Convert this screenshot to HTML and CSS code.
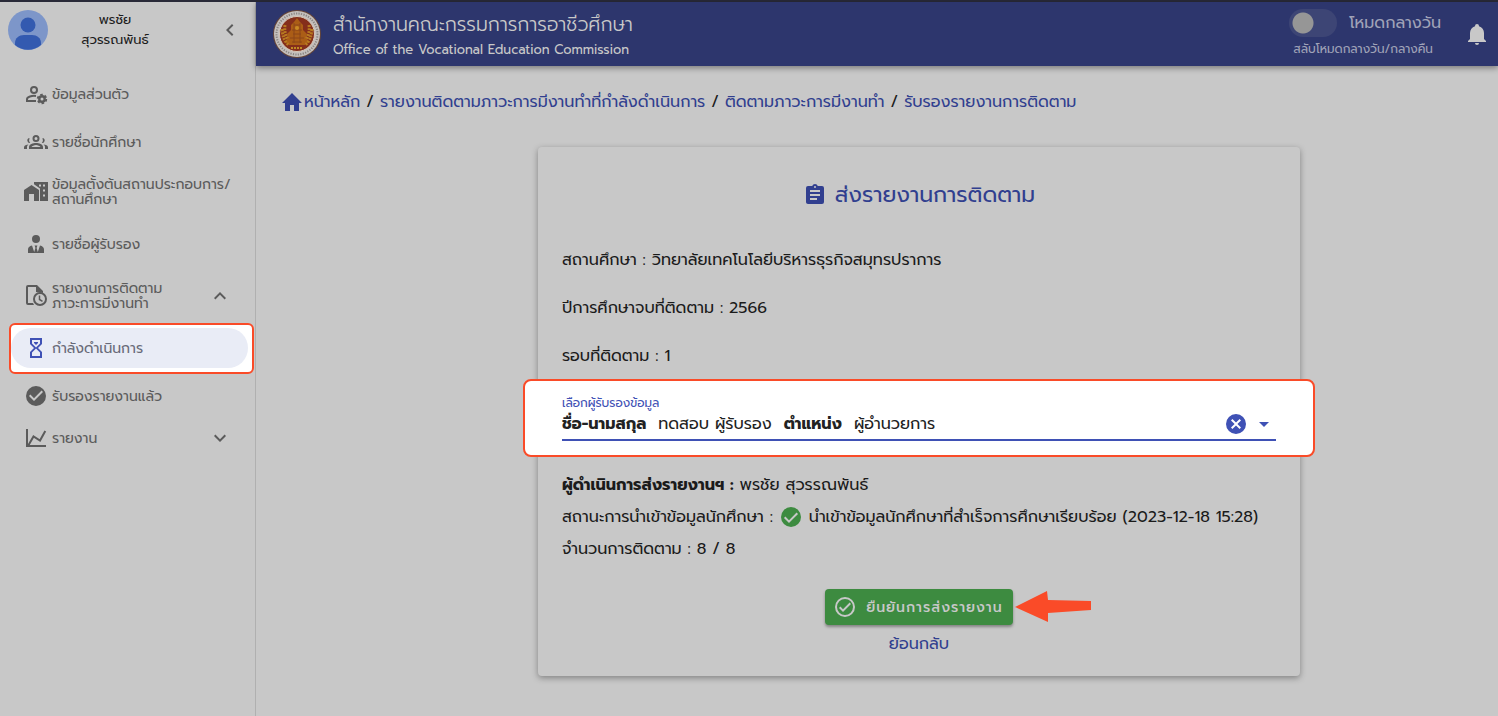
FILE: index.html
```
<!DOCTYPE html>
<html lang="th">

<head>
    <meta charset="UTF-8">
    <meta name="viewport" content="width=device-width, initial-scale=1">
    <title>ส่งรายงานการติดตาม</title>
    <link rel="stylesheet" href="styles.css">
</head>

<body>
    <div class="app">
        <aside class="sidebar">
            <div class="profile">
                <svg class="avatar" viewBox="0 0 40 40">
                    <circle cx="20" cy="20" r="20" fill="#7d96c9" />
                    <circle cx="20" cy="15" r="7.500" fill="#335ab0" />
                    <path d="M7 35v-2c0-5 4-8 9-8h8c5 0 9 3 9 8v2a20 20 0 0 1-26 0z" fill="#335ab0" />
                </svg>
                <div class="profile-name">พรชัย<br>สุวรรณพันธ์</div>
                <button class="icon-button" type="button" aria-label="ย่อเมนู">
                    <svg class="icon" viewBox="0 0 24 24"><path d="M15.4 16.6 10.8 12l4.6-4.6L14 6l-6 6 6 6z" /></svg>
                </button>
            </div>
            <nav class="menu">
                <a class="menu-item" href="#">
                    <svg class="icon" viewBox="0 0 24 24">
                        <circle cx="10" cy="8" r="3" fill="none" stroke="currentColor" stroke-width="2" />
                        <path d="M12 14c-4-.6-9 .8-9 3.200V19h9" fill="none" stroke="currentColor" stroke-width="2" />
                        <circle cx="18" cy="17" r="2.700" fill="none" stroke="currentColor" stroke-width="2.400" />
                        <circle cx="18" cy="17" r="4.300" fill="none" stroke="currentColor" stroke-width="1.800" stroke-dasharray="2.500 2" />
                    </svg>
                    <span>ข้อมูลส่วนตัว</span>
                </a>
                <a class="menu-item" href="#">
                    <svg class="icon" viewBox="0 0 24 24">
                        <path d="M12 5a3.500 3.500 0 1 0 0 7 3.500 3.500 0 0 0 0-7zm0 2a1.500 1.500 0 1 1 0 3 1.500 1.500 0 0 1 0-3zM12 13c-3 0-7 1.300-7 4v2h14v-2c0-2.700-4-4-7-4zm-4.500 4c.5-1 2.700-2 4.500-2s4 1 4.500 2z" fill-rule="evenodd" />
                        <path d="M5.500 8a2.500 2.500 0 0 0 .7 5 5 5 0 0 1-.7-5zM18.500 8a2.500 2.500 0 0 1-.7 5 5 5 0 0 0 .7-5zM4.500 14.500C2.500 14.600 0 15.500 0 17.300V19h3v-2c0-1 .5-1.800 1.500-2.500zM19.500 14.500c2 .1 4.500 1 4.500 2.800V19h-3v-2c0-1-.5-1.800-1.500-2.500z" />
                    </svg>
                    <span>รายชื่อนักศึกษา</span>
                </a>
                <a class="menu-item tall" href="#">
                    <svg class="icon" viewBox="0 0 24 24"><path d="M0 10v11h5v-7h5v7h5V10L7.500 5zM10 2v2.200l6 4.300V21h8V2zm5 2.500h2v2h-2zm4 0h2v2h-2zm0 5h2v2h-2zm0 5h2v2h-2z" fill-rule="evenodd" /></svg>
                    <span>ข้อมูลตั้งต้นสถานประกอบการ/<br>สถานศึกษา</span>
                </a>
                <a class="menu-item tall" href="#">
                    <svg class="icon" viewBox="0 0 24 24"><path d="M12 3a4 4 0 1 1 0 8 4 4 0 0 1 0-8zm4 10.500-2.200 6.500L12.600 16l.8-2.500h-2.800l.8 2.500-1.200 4L8 13.500c-2.500.6-4 2-4 4V21h16v-3.500c0-2-1.500-3.400-4-4z" /></svg>
                    <span>รายชื่อผู้รับรอง</span>
                </a>
                <a class="menu-item tall" href="#">
                    <svg class="icon" viewBox="0 0 24 24">
                        <path d="M4 1h9l6 6v2l-7-1V3H4v16h5l1 2H4a2 2 0 0 1-2-2V3a2 2 0 0 1 2-2z" />
                        <circle cx="16" cy="15" r="6" fill="none" stroke="currentColor" stroke-width="2" />
                        <path d="M15.500 11.500v4l3 1.800" fill="none" stroke="currentColor" stroke-width="1.500" />
                    </svg>
                    <span class="grow">รายงานการติดตาม<br>ภาวะการมีงานทำ</span>
                    <svg class="icon" viewBox="0 0 24 24"><path d="m7.400 15.400 4.600-4.600 4.600 4.600L18 14l-6-6-6 6z" /></svg>
                </a>
                <div class="menu-highlight">
                    <a class="menu-item active" href="#">
                        <svg class="icon" viewBox="0 0 24 24"><path d="M6 2v6l4 4-4 4v6h12v-6l-4-4 4-4V2zm10 14.500V20H8v-3.500l4-4zM12 11.500l-4-4V4h8v3.500zM10 6h4v1l-2 2-2-2z" fill-rule="evenodd" /></svg>
                        <span>กำลังดำเนินการ</span>
                    </a>
                </div>
                <a class="menu-item short" href="#">
                    <svg class="icon" viewBox="0 0 24 24"><path d="M12 2a10 10 0 1 0 0 20 10 10 0 0 0 0-20zm-2 15-5-5 1.400-1.400 3.600 3.600 7.600-7.600L19 8z" /></svg>
                    <span>รับรองรายงานแล้ว</span>
                </a>
                <a class="menu-item short" href="#">
                    <svg class="icon" viewBox="0 0 24 24"><path d="M3 3v17h19M4 20l5.500-9.500 6.500 4L21.300 5" fill="none" stroke="currentColor" stroke-width="2" /></svg>
                    <span class="grow">รายงาน</span>
                    <svg class="icon" viewBox="0 0 24 24"><path d="M7.400 8.600 12 13.200l4.600-4.600L18 10l-6 6-6-6z" /></svg>
                </a>
            </nav>
        </aside>

        <div class="page">
            <header class="topbar">
                <svg class="logo" viewBox="0 0 48 48">
                    <circle cx="24" cy="24" r="24" fill="#684739" />
                    <circle cx="24" cy="24" r="23" fill="#c5c0bd" />
                    <circle cx="24" cy="24" r="20.500" fill="none" stroke="#8a8481" stroke-width="2" stroke-dasharray="1.200 1.300" />
                    <circle cx="24" cy="24" r="17.500" fill="#842e1b" stroke="#d8c8b8" />
                    <path d="M24 8l3 4 3 3v5l4 4-1 4 3 4-4 3H16l-4-3 3-4-1-4 4-4v-5l3-3z" fill="#ab5d16" />
                    <path d="M9 19q1 12 7 16M39 19q-1 12-7 16M12 15q-1 9 3 14M36 15q1 9-3 14" fill="none" stroke="#b87a20" stroke-width="3" stroke-dasharray="2 1" />
                    <path d="M21 15h6M19 20h10M20 24h8M17 28h14M19 32h10M21 13v20M27 13v20" stroke="#8c4718" />
                    <circle cx="24" cy="18" r="2" fill="#c98a24" />
                    <path d="M18 38h12" stroke="#c18b23" stroke-width="2" stroke-dasharray="2 1" />
                </svg>
                <div class="brand">
                    <div class="brand-th">สำนักงานคณะกรรมการการอาชีวศึกษา</div>
                    <div class="brand-en">Office of the Vocational Education Commission</div>
                </div>
                <div class="mode">
                    <div class="mode-row">
                        <input class="switch" type="checkbox" role="switch" id="mode">
                        <label for="mode">โหมดกลางวัน</label>
                    </div>
                    <div class="mode-hint">สลับโหมดกลางวัน/กลางคืน</div>
                </div>
                <button class="icon-button bell" type="button" aria-label="การแจ้งเตือน">
                    <svg class="icon" viewBox="0 0 24 24"><path d="M21 19v1H3v-1l2-2v-6c0-3.100 2-5.800 5-6.700V4a2 2 0 1 1 4 0v.3c3 .9 5 3.600 5 6.700v6zM14 21a2 2 0 0 1-4 0z" /></svg>
                </button>
            </header>

            <main>
                <nav class="breadcrumb">
                    <a class="home" href="#">
                        <svg viewBox="0 0 20 18"><path d="M8 18v-6h4v6h5v-8h3L10 0 0 10h3v8z" /></svg>หน้าหลัก
                    </a>
                    <span>/</span>
                    <a href="#">รายงานติดตามภาวะการมีงานทำที่กำลังดำเนินการ</a>
                    <span>/</span>
                    <a href="#">ติดตามภาวะการมีงานทำ</a>
                    <span>/</span>
                    <a href="#">รับรองรายงานการติดตาม</a>
                </nav>

                <div class="content">
                    <section class="card">
                        <h1>
                            <svg class="icon" viewBox="0 0 24 24"><path d="M19 3h-4.200a3 3 0 0 0-5.600 0H5a2 2 0 0 0-2 2v14c0 1.100.9 2 2 2h14a2 2 0 0 0 2-2V5a2 2 0 0 0-2-2zm-7 0a1 1 0 1 1 0 2 1 1 0 0 1 0-2zM7 7h10v2H7zm0 4h10v2H7zm0 4h7v2H7z" fill-rule="evenodd" /></svg>
                            ส่งรายงานการติดตาม
                        </h1>
                        <p class="info">สถานศึกษา : วิทยาลัยเทคโนโลยีบริหารธุรกิจสมุทรปราการ</p>
                        <p class="info">ปีการศึกษาจบที่ติดตาม : 2566</p>
                        <p class="info">รอบที่ติดตาม : 1</p>

                        <div class="field-highlight">
                            <label for="certifier">เลือกผู้รับรองข้อมูล</label>
                            <div class="field">
                                <div class="field-value" aria-hidden="true">
                                    <b>ชื่อ-นามสกุล</b><span>ทดสอบ ผู้รับรอง</span><b>ตำแหน่ง</b><span>ผู้อำนวยการ</span>
                                </div>
                                <select id="certifier">
                                    <option>ทดสอบ ผู้รับรอง ผู้อำนวยการ</option>
                                </select>
                                <button class="icon-button clear" type="button" aria-label="ล้าง">
                                    <svg class="icon" viewBox="0 0 24 24"><path d="M12 2a10 10 0 1 0 0 20 10 10 0 0 0 0-20zm5 13.600L15.600 17 12 13.400 8.400 17 7 15.600l3.600-3.600L7 8.400 8.400 7l3.600 3.600L15.600 7 17 8.400 13.400 12z" /></svg>
                                </button>
                                <svg class="icon" viewBox="0 0 24 24"><path d="m7 10 5 5 5-5z" /></svg>
                            </div>
                        </div>

                        <p class="status"><b>ผู้ดำเนินการส่งรายงานฯ :</b> พรชัย สุวรรณพันธ์</p>
                        <p class="status">
                            สถานะการนำเข้าข้อมูลนักศึกษา :
                            <svg class="icon ok" viewBox="0 0 24 24"><circle cx="12" cy="12" r="10" /><path d="m5.700 12.300 4.300 4.300 8.300-8.300" fill="none" stroke="#c8c8c8" stroke-width="2" /></svg>
                            นำเข้าข้อมูลนักศึกษาที่สำเร็จการศึกษาเรียบร้อย (2023-12-18 15:28)
                        </p>
                        <p class="status">จำนวนการติดตาม : 8 / 8</p>

                        <div class="actions">
                            <div class="submit-wrap">
                                <button class="submit" type="button">
                                    <svg class="icon" viewBox="0 0 24 24"><path d="M12 2a10 10 0 1 0 0 20 10 10 0 0 0 0-20zm0 2a8 8 0 1 1 0 16 8 8 0 0 1 0-16zm4.600 3.600L10 14.200l-2.600-2.600L6 13l4 4 8-8z" fill-rule="evenodd" /></svg>
                                    ยืนยันการส่งรายงาน
                                </button>
                                <svg class="arrow" viewBox="0 0 76 31"><path d="M0 16 32 0 33 9 76 10v9l-43 3v9z" /></svg>
                            </div>
                            <a href="#">ย้อนกลับ</a>
                        </div>
                    </section>
                </div>
            </main>
        </div>
    </div>
</body>

</html>
```
FILE: styles.css
```
* {
    box-sizing: border-box;
}

body {
    margin: 0;
    background-color: #c8c8c8;
    color: #1b1b1b;
    font-family: Prompt, "Noto Sans Thai", "Noto Sans", sans-serif;
    font-size: 16px;
    line-height: 24px;
}

a {
    color: #313f8f;
    text-decoration: none;
}

.icon {
    width: 24px;
    height: 24px;
    flex-shrink: 0;
    fill: currentColor;
}

.icon-button {
    display: flex;
    padding: 0;
    border: 0;
    background: none;
    color: inherit;
    cursor: pointer;
}

.app {
    display: flex;
    min-height: 100vh;
    border-top: 2px solid #292a38;
}

/* sidebar */
.sidebar {
    width: 256px;
    flex-shrink: 0;
    border-right: 1px solid #b0b0b0;
    color: #5b5b5b;
    font-size: 14px;
    line-height: 15px;
}

.profile {
    display: flex;
    align-items: center;
    height: 56px;
    padding: 0 13px 0 8px;
}

.avatar {
    width: 40px;
    height: 40px;
}

.profile-name {
    flex: 1;
    padding-right: 36px;
    color: #1b1b1b;
    font-size: 13px;
    line-height: 20px;
    text-align: center;
}

.menu {
    padding-top: 12px;
}

.menu-item {
    display: flex;
    align-items: center;
    gap: 4px;
    height: 48px;
    padding: 0 23px 0 24px;
    color: #5b5b5b;
    white-space: nowrap;
}

.menu-item.tall {
    height: 52px;
}

.menu-item.short {
    height: 42px;
}

.grow {
    flex: 1;
}

.menu-highlight {
    margin: 1px 1px 1px 9px;
    padding: 3px 4px 4px 0;
    border: 2px solid #fa4b28;
    border-radius: 6px;
    background-color: #fff;
}

.menu-item.active {
    height: 40px;
    padding: 0 13px;
    border-radius: 20px;
    background-color: #e9ecf6;
    color: #686a78;
}

.active .icon {
    color: #3f51b5;
}

/* top bar */
.page {
    flex: 1;
    min-width: 0;
}

.topbar {
    display: flex;
    align-items: center;
    height: 64px;
    padding: 0 9px 0 17px;
    background-color: #2d366d;
    box-shadow: 0 2px 6px rgba(0, 0, 0, 0.4);
    color: #c8c8c8;
}

.logo {
    width: 48px;
    height: 48px;
    margin-right: 12px;
}

.brand {
    flex: 1;
    padding-top: 6px;
    white-space: nowrap;
}

.brand-th {
    font-size: 19px;
    font-weight: 300;
    line-height: 26px;
}

.brand-en {
    font-size: 13px;
}

.mode {
    margin-right: 24px;
    padding-top: 2px;
    color: #a0a3b8;
}

.mode-row {
    display: flex;
    align-items: center;
    gap: 12px;
}

.switch {
    width: 48px;
    height: 28px;
    margin: 0;
    border-radius: 14px;
    appearance: none;
    background: radial-gradient(circle at 14px 14px, #969696 10px, transparent 11px) #3d4575;
}

.mode-hint {
    padding-left: 4px;
    font-size: 12px;
}

/* content */
.breadcrumb {
    display: flex;
    gap: 6px;
    padding: 24px 26px 0;
    white-space: nowrap;
}

.home {
    display: flex;
    align-items: center;
    gap: 2px;
}

.home svg {
    width: 20px;
    height: 18px;
    fill: currentColor;
}

.content {
    display: grid;
    grid-template-columns: 37fr 100fr 26fr;
    padding: 33px 0;
}

.card {
    grid-column: 2;
    padding: 24px 24px 20px;
    border-radius: 4px;
    box-shadow: 0 2px 6px rgba(0, 0, 0, 0.35);
}

.card h1 {
    display: flex;
    align-items: center;
    justify-content: center;
    gap: 8px;
    margin: 0 0 29px;
    color: #313f8f;
    font-size: 22px;
    font-weight: 400;
    line-height: 48px;
}

.info {
    margin: 0 0 24px;
}

.info + .field-highlight {
    margin-top: -13px;
}

/* reaches past both card edges */
.field-highlight {
    margin: 0 -39px 12px;
    padding: 13px 37px 14px;
    border: 2px solid #fa4b28;
    border-radius: 8px;
    background-color: #fff;
}

.field-highlight label {
    display: block;
    color: #3f51b5;
    font-size: 12px;
    line-height: 18px;
}

.field {
    display: flex;
    position: relative;
    align-items: center;
    gap: 4px;
    padding-bottom: 3px;
    border-bottom: 2px solid #3f51b5;
    color: #3f51b5;
}

.field-value {
    display: flex;
    flex: 1;
    gap: 12px;
    color: #222;
    white-space: nowrap;
}

.field select {
    position: absolute;
    inset: 0;
    width: 100%;
    opacity: 0;
}

.clear {
    position: relative;
}

.status {
    display: flex;
    align-items: center;
    gap: 6px;
    margin: 0;
    line-height: 32px;
    white-space: nowrap;
}

.ok {
    color: #3d8b40;
}

.actions {
    display: flex;
    flex-direction: column;
    align-items: center;
    gap: 7px;
    padding-top: 24px;
}

.submit-wrap {
    position: relative;
}

.submit {
    display: flex;
    align-items: center;
    gap: 9px;
    height: 36px;
    padding: 0 10px 0 8px;
    border: 0;
    border-radius: 4px;
    background-color: #3d8b40;
    box-shadow: 0 2px 3px rgba(0, 0, 0, 0.35);
    color: #c8c8c8;
    font-family: inherit;
    font-size: 14px;
    font-weight: 500;
    letter-spacing: 1px;
    white-space: nowrap;
}

.arrow {
    position: absolute;
    top: 2px;
    left: 100%;
    width: 76px;
    height: 31px;
    margin-left: 2px;
    fill: #fa4b28;
}
```
